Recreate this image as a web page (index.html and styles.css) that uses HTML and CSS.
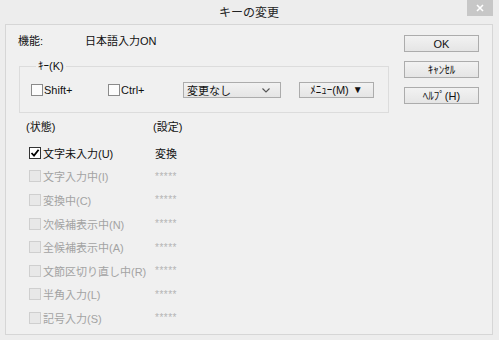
FILE: index.html
```html
<!DOCTYPE html>
<html lang="ja">
<head>
<meta charset="utf-8">
<title>キーの変更</title>
<link rel="stylesheet" href="styles.css">
</head>
<body>
<div class="window">
  <div class="titlebar">
    <span class="spacer"></span>
    <span class="title">キーの変更</span>
    <span class="close-wrap"><span class="close">
      <svg width="8" height="8" viewBox="0 0 8 8"><path d="M1 1L7 7M7 1L1 7" stroke="#fff" stroke-width="1.6"/></svg>
    </span></span>
  </div>
  <div class="client">
    <div class="main">
      <div class="func"><span class="func-label">機能:</span><span>日本語入力ON</span></div>
      <fieldset class="group">
        <legend>ｷｰ(K)</legend>
        <div class="keyrow">
          <label class="chk shift"><span class="box"></span>Shift+</label>
          <label class="chk ctrl"><span class="box"></span>Ctrl+</label>
          <div class="select"><span>変更なし</span>
            <svg width="8" height="5" viewBox="0 0 8 5"><path d="M0.5 0.5L4 4L7.5 0.5" fill="none" stroke="#555" stroke-width="1.1"/></svg>
          </div>
          <div class="btn menu">ﾒﾆｭｰ(M) <span class="tri">▼</span></div>
        </div>
      </fieldset>
      <div class="heads"><span class="h1">(状態)</span><span>(設定)</span></div>
      <div class="rows">
        <div class="state"><span class="box checked"><svg width="10" height="10" viewBox="0 0 10 10"><path d="M1.5 5L4 7.6L8.6 1.8" fill="none" stroke="#000" stroke-width="1.8"/></svg></span>文字未入力(U)</div>
        <div class="val">変換</div>
        <div class="state off"><span class="box"></span>文字入力中(I)</div><div class="val off">*****</div>
        <div class="state off"><span class="box"></span>変換中(C)</div><div class="val off">*****</div>
        <div class="state off"><span class="box"></span>次候補表示中(N)</div><div class="val off">*****</div>
        <div class="state off"><span class="box"></span>全候補表示中(A)</div><div class="val off">*****</div>
        <div class="state off"><span class="box"></span>文節区切り直し中(R)</div><div class="val off">*****</div>
        <div class="state off"><span class="box"></span>半角入力(L)</div><div class="val off">*****</div>
        <div class="state off"><span class="box"></span>記号入力(S)</div><div class="val off">*****</div>
      </div>
    </div>
    <div class="buttons">
      <div class="btn">OK</div>
      <div class="btn">ｷｬﾝｾﾙ</div>
      <div class="btn">ﾍﾙﾌﾟ(H)</div>
    </div>
  </div>
</div>
</body>
</html>
```
FILE: styles.css
```css
* { box-sizing: border-box; }
html, body { margin: 0; padding: 0; }
body {
  width: 499px;
  height: 340px;
  overflow: hidden;
  font-family: "Liberation Sans", "Noto Sans CJK JP", sans-serif;
  font-size: 11px;
  color: #111;
  background: #ececec;
}
.window {
  width: 499px;
  height: 340px;
  display: flex;
  flex-direction: column;
  background: #ededed;
}
.titlebar {
  height: 24px;
  display: grid;
  grid-template-columns: 1fr auto 1fr;
  align-items: start;
}
.title {
  font-size: 12px;
  line-height: 14px;
  margin-top: 6px;
  color: #222;
  margin-left: -1px;
}
.close-wrap {
  justify-self: end;
  margin-right: 6px;
}
.close {
  display: flex;
  align-items: center;
  justify-content: center;
  width: 26px;
  height: 16px;
  background: #c7c7c7;
}
.client {
  margin: 0 6px 5px 5px;
  height: 311px;
  border: 1px solid #d6d6d6;
  background: #f0f0f0;
  display: flex;
  padding: 0 13px 0 12px;
}
.main { flex: 1; display: flex; flex-direction: column; }
.func {
  margin-top: 9px;
  line-height: 14px;
  display: flex;
}
.func-label { width: 67px; }
.group {
  margin: 11px 0 0 1px;
  width: 370px;
  border: 1px solid #dcdcdc;
  padding: 9px 0 14px 11px;
  min-width: 0;
}
.group legend {
  padding: 0 2px;
  margin-left: 5px;
  line-height: 14px;
}
.keyrow { display: flex; align-items: center; height: 16px; }
.chk { display: flex; align-items: center; }
.shift { width: 77px; }
.ctrl { width: 75px; }
.box {
  width: 12px;
  height: 12px;
  border: 1px solid #8a8a8a;
  background: #fcfcfc;
  margin-right: 1px;
  display: inline-flex;
  align-items: center;
  justify-content: center;
  flex: none;
}
.box.checked { border-color: #333; background: #fff; }
.select {
  width: 98px;
  height: 16px;
  border: 1px solid #acacac;
  background: linear-gradient(#f2f2f2, #e5e5e5);
  display: flex;
  align-items: center;
  justify-content: space-between;
  padding: 0 10px 0 3px;
  margin-right: 18px;
}
.btn {
  width: 75px;
  height: 17px;
  border: 1px solid #acacac;
  background: linear-gradient(#f2f2f2, #e5e5e5);
  display: flex;
  align-items: center;
  justify-content: center;
  line-height: 14px;
}
.btn.menu { height: 16px; gap: 4px; }
.tri { font-size: 10px; }
.heads {
  margin-top: 7px;
  line-height: 14px;
  display: flex;
  padding-left: 8px;
}
.h1 { width: 127px; }
.rows {
  margin-top: 7px;
  display: grid;
  grid-template-columns: 126px auto;
  grid-auto-rows: 23.6px;
  align-items: center;
  padding-left: 11px;
}
.state { display: flex; align-items: center; }
.state .box { margin-right: 2px; }
.state.off { color: #a3a3a3; }
.state.off .box { border-color: #cfcfcf; background: #e8e8e8; }
.val.off { color: #b4b4b4; font-size: 10px; letter-spacing: 0.5px; }
.buttons {
  display: flex;
  flex-direction: column;
  gap: 9px;
  margin-top: 10px;
}
```
